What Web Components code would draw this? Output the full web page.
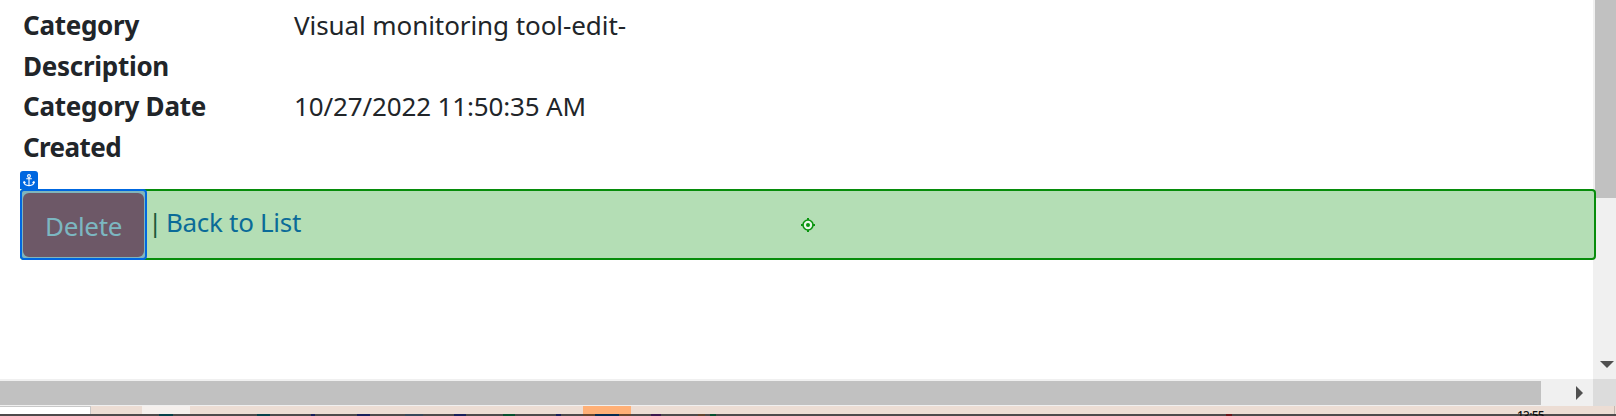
<!DOCTYPE html>
<html lang="en">
<head>
<meta charset="utf-8">
<title>Delete category</title>
<style>
html,body{margin:0;width:1616px;height:416px;overflow:hidden;background:#fff}
body{font-family:"Noto Sans","Open Sans",sans-serif;font-size:26px;color:#212529}
</style>
</head>
<body>
<app-window></app-window>
<script>
const define=(name,html,init)=>customElements.define(name,class extends HTMLElement{
  connectedCallback(){
    if(this.shadowRoot)return;
    this.attachShadow({mode:"open"}).innerHTML=html;
    if(init)init.call(this);
  }
});

// Text run spaced to fill the width given in its "w" attribute.
define("fit-text",`<style>:host{display:block;white-space:pre;width:max-content}span{display:inline-block}</style><span><slot></slot></span>`,function(){
  const n=this.textContent.length,w=+this.getAttribute("w");
  const s=(w-this.getBoundingClientRect().width)/n;
  this.style.letterSpacing=s+"px";
});

define("detail-row",`<style>
:host{display:grid;grid-template-columns:271px 1fr;line-height:40.5px;height:81px}
.k{font-weight:700}
</style><div class="k"><slot name="term"></slot></div><div><slot></slot></div>`);

define("anchor-tag",`<style>:host{display:flex;justify-content:center;width:18px;height:18px;background:#0067e0;border-radius:3px 3px 0 0}svg{display:block;margin-top:3px}</style>
<svg width="12" height="13" viewBox="0 0 12 13" fill="none" stroke="#fff" stroke-width="1.1"><circle cx="6" cy="2" r="1.4"/><path d="M6 3.4V11.8M3.2 4.8H8.8M1 7.8C1 10.2 3 11.6 6 11.7C9 11.6 11 10.2 11 7.8M.4 9.1L1.1 7.6L2.5 8.7M11.6 9.1L10.9 7.6L9.5 8.7"/></svg>`);

define("target-mark",`<style>:host{display:block;width:14px;height:14px}svg{display:block}</style>
<svg width="14" height="14" viewBox="0 0 14 14"><path d="M7 0V14M0 7H14" stroke="#0a950f" stroke-width="2"/><circle cx="7" cy="7" r="5" fill="#e8f6e8" stroke="#0a950f" stroke-width="1.6"/><circle cx="7" cy="7" r="2" fill="#0a950f"/></svg>`);

define("delete-button",`<style>
:host{display:block;box-sizing:border-box;width:127px;height:71px;border:2px solid #0067e0;border-radius:4px;background:#7fb5bd;padding:2px 1px 1px}
div{box-sizing:border-box;height:64px;border-radius:6px;background:#6d5867;color:#7cb7c1;padding:13px 0 0 22px;line-height:40px}
</style><div><slot></slot></div>`);

define("action-bar",`<style>
:host{display:flex;box-sizing:border-box;width:1576px;height:71px;border:2px solid #078c0b;border-radius:4px;background:#b4deb5;position:relative;z-index:2;line-height:40px}
delete-button{margin:-2px 0 0 -2px;flex:none}
.bar{margin:11px 0 0 1px;width:14px;color:#1d5a3c}
.link{margin:11px 0 0 4px;color:#0a6b98}
target-mark{position:absolute;left:779px;top:27px}
</style><delete-button><fit-text w="77">Delete</fit-text></delete-button><div class="bar">|</div><div class="link"><fit-text w="135">Back to List</fit-text></div><target-mark></target-mark>`);

define("page-body",`<style>
:host{display:block;box-sizing:border-box;padding:5px 0 0 23px;background:#fff;min-width:0}
anchor-tag{margin:4px 0 0 -3px}
action-bar{margin-left:-3px}
</style>
<detail-row><div slot="term"><fit-text w="116">Category</fit-text><fit-text w="146">Description</fit-text></div><fit-text w="332">Visual monitoring tool-edit-</fit-text></detail-row>
<detail-row><div slot="term"><fit-text w="183">Category Date</fit-text><fit-text w="98">Created</fit-text></div><fit-text w="292">10/27/2022 11:50:35 AM</fit-text></detail-row>
<anchor-tag></anchor-tag><action-bar></action-bar>`);

define("v-scroll",`<style>
:host{display:flex;flex-direction:column;justify-content:space-between;background:#f0f0f0;height:379px}
.t{height:198px;margin-left:2px;background:#c1c1c1}
svg{display:block;margin:0 0 11px 7px}
</style><div class="t"></div><svg width="14" height="7"><path d="M0 0H14L7 7Z" fill="#505050"/></svg>`);

define("h-scroll",`<style>
:host{display:flex;justify-content:space-between;background:#f0f0f0;height:27px;box-sizing:border-box;padding-top:2px}
.t{height:24px;width:1541px;background:#c1c1c1}
svg{display:block;margin:5px 10px 0 0}
</style><div class="t"></div><svg width="7" height="14"><path d="M0 0V14L7 7Z" fill="#505050"/></svg>`);

define("task-bar",`<style>
:host{display:block;grid-column:1/3;height:10px;overflow:hidden}
.row{display:flex;height:8px;background:#ecddd4}
.search{box-sizing:border-box;width:91px;border:solid #c8c8c8;border-width:1px 1px 0 0;background:#fff}
.a{width:48px;margin-left:51px;background:#f5f0ed}
.o{width:48px;margin-left:393px;background:#ffb077}
.clock{margin-left:886px;height:10px;position:relative;font:500 12px/12px "Noto Sans",sans-serif;color:#111;padding-top:4px;box-sizing:border-box}
.edge{width:1px;margin:0 1px 0 auto;background:#c5b8b1}
svg{display:block;background:#4d4a4b}
</style><div class="row"><div class="search"></div><div class="a"></div><div class="o"></div><div class="clock"><fit-text w="27">13:55</fit-text></div><div class="edge"></div></div>
<svg width="1616" height="2"><g fill="#064049"><path d="M159 0h14v2h-14zM257 0h13v2h-13z"/></g><g fill="#17205a"><path d="M311 0h4v2h-4zM357 0h13v2h-13zM454 0h12v2h-12zM556 0h5v2h-5z"/></g><path d="M405 0h18v2h-18z" fill="#37485a"/><path d="M503 0h12v2h-12zM710 0h6v2h-6z" fill="#07502f"/><path d="M583 0h48v2h-48z" fill="#66452e"/><path d="M595 0h24v2h-24z" fill="#062a50"/><path d="M651 0h10v2h-10z" fill="#3b174c"/><path d="M698 0h7v2h-7z" fill="#62462f"/><path d="M1226 0h6v2h-6z" fill="#6a161a"/></svg>`);

define("app-window",`<style>
:host{display:grid;grid-template-columns:1593px 23px;grid-template-rows:379px 27px 10px;width:1616px;height:416px}
.corner{background:#dcdcdc}
</style><page-body></page-body><v-scroll></v-scroll><h-scroll></h-scroll><div class="corner"></div><task-bar></task-bar>`);
</script>
</body>
</html>
